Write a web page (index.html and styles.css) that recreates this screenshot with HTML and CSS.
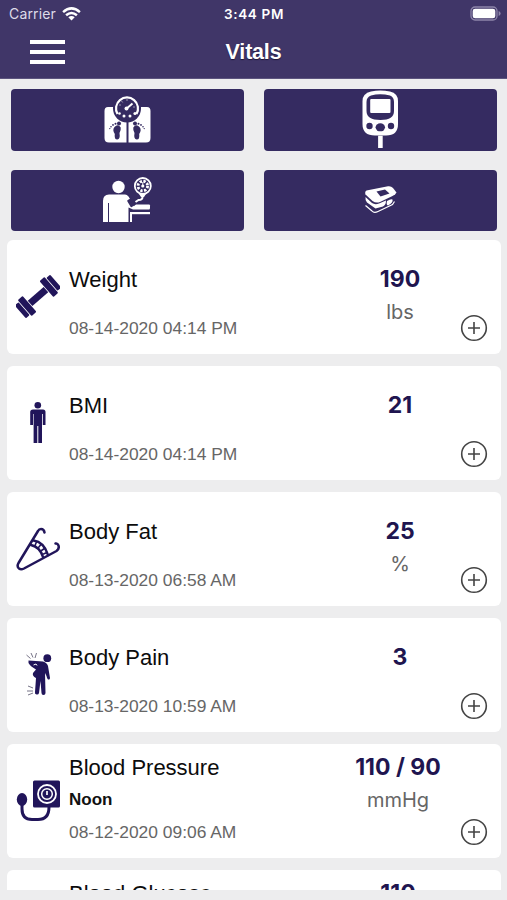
FILE: index.html
```html
<!DOCTYPE html>
<html lang="en">
<head>
<meta charset="utf-8">
<title>Vitals</title>
<link rel="stylesheet" href="styles.css">
</head>
<body>
<svg width="0" height="0" class="defs">
  <symbol id="plus" viewBox="0 0 28 28">
    <g fill="none" stroke="#444" stroke-width="1.6"><circle cx="14" cy="14" r="12.3"/><path d="M14 8v12M8 14h12"/></g>
  </symbol>
</svg>
<header class="header">
  <div class="status">
    <div class="carrier"><span class="carrier-name">Carrier</span>
      <svg class="wifi" viewBox="0 0 19 14"><g fill="none" stroke="#fff" stroke-width="2.5"><path d="M1.1 5.1Q9.5-2.3 17.9 5.1"/><path d="M4.1 8.3Q9.5 3.6 14.9 8.3"/></g><path fill="#fff" d="M6.3 10.3Q9.5 7.8 12.7 10.3L9.5 13.6Z"/></svg>
    </div>
    <div class="clock">3:44 PM</div>
    <svg class="battery" viewBox="0 0 31 15"><rect x="1" y="1" width="26" height="13" rx="4" fill="none" stroke="#8d85a9" stroke-width="1.3"/><rect x="2.7" y="2.7" width="22.6" height="9.6" rx="2.4" fill="#fff"/><path d="M28.6 5v5q2-.8 2-2.5t-2-2.5z" fill="#8d85a9"/></svg>
  </div>
  <div class="titlebar">
    <div class="menu"><i></i><i></i><i></i></div>
    <h1>Vitals</h1>
  </div>
</header>

<nav class="devices">
  <div class="device">
    <svg viewBox="90 85 80 70">
      <path fill="#fff" d="M108 107H114Q115 117 127 119.500Q139 117 141 107H147Q150.500 107 150.500 111V138Q150.500 142.500 146 142.500H109Q104.500 142.500 104.500 138V111Q104.500 107 108 107Z"/>
      <circle cx="127" cy="108.500" r="14" fill="#352b61"/>
      <path d="M117.500 114A11 11 0 1 1 136.500 114" fill="none" stroke="#fff" stroke-width="2.200"/>
      <path d="M127.500 117V143" stroke="#352b61" stroke-width="2"/>
      <path d="M125.500 109.500L132.500 103.500" stroke="#fff" stroke-width="2"/><circle cx="126.500" cy="108.500" r="2" fill="#fff"/>
      <path d="M119 105h2M121.500 101l1.200 1.500M127 99v2M133 107h2" stroke="#fff" stroke-opacity=".5"/>
      <g fill="#fff"><circle cx="119.500" cy="113.500" r="1.300"/><circle cx="124" cy="116" r="1.500"/><circle cx="130" cy="116" r="1.500"/><circle cx="135" cy="113.500" r="1.600"/></g>
      <g fill="#352b61"><path d="M114.500 127Q118 123.500 120.700 127.500Q121.200 130 119.500 133Q120.500 139 117.300 139.500Q114 139.500 114.800 134Q112 130 114.500 127Z"/><circle cx="119" cy="123.500" r="2"/><circle cx="115.500" cy="123.800" r="1"/><circle cx="113" cy="124.900" r=".9"/><circle cx="111" cy="126.700" r=".8"/><circle cx="109.800" cy="128.600" r=".7"/>
      <path d="M139.500 127Q136 123.500 133.300 127.500Q132.800 130 134.500 133Q133.500 139 136.700 139.500Q140 139.500 139.200 134Q142 130 139.500 127Z"/><circle cx="135" cy="123.500" r="2"/><circle cx="138.500" cy="123.800" r="1"/><circle cx="141" cy="124.900" r=".9"/><circle cx="143" cy="126.700" r=".8"/><circle cx="144.200" cy="128.600" r=".7"/></g>
    </svg>
  </div>
  <div class="device">
    <svg viewBox="340 85 80 70">
      <path fill="#fff" d="M371 91.500Q380 89.500 390 91.500Q398 93.500 398 101V124Q398 135.500 386 135.500H375Q362.500 135.500 362.500 124V101Q362.500 93.500 371 91.500Z"/>
      <path fill="#352b61" d="M371 95.500Q380 93 390 95.500Q394 97 394 102V111Q394 120 380.500 120Q366.500 120 366.500 111V102Q366.500 97 371 95.500Z"/>
      <rect x="370.200" y="99" width="20.300" height="14" rx="1" fill="#fff"/>
      <g fill="#352b61"><circle cx="369.500" cy="126" r="3.200"/><ellipse cx="380.300" cy="127.300" rx="4.700" ry="4"/><circle cx="391" cy="126" r="3.200"/></g>
      <path d="M380.400 135.800V148" stroke="#fff" stroke-width="4.600"/>
    </svg>
  </div>
  <div class="device">
    <svg viewBox="90 165 80 70">
      <g fill="#fff"><circle cx="118.500" cy="187" r="6.200"/><path d="M109 194.500H125Q127 194.500 128.500 196.500L134 205.500H149.500V209.500H133L128.500 207.500V222H103V201Q103 194.500 109 194.500Z"/><rect x="130" y="212" width="20" height="2.200"/><rect x="130" y="212" width="2" height="10"/><rect x="135" y="204.500" width="15" height="4.500" rx="1"/></g>
      <path d="M108.500 203V222" stroke="#352b61"/><rect x="-4" y="-3" width="8" height="6" rx="1" transform="translate(131.500 202.500) rotate(60)" fill="#352b61"/>
      <path d="M142.500 193V197Q142.500 200 138.500 200L135.500 202" fill="none" stroke="#fff" stroke-width="2"/>
      <circle cx="142.800" cy="186" r="8" fill="none" stroke="#fff" stroke-width="1.800"/><circle cx="142.800" cy="186" r="4.800" fill="none" stroke="#fff" stroke-width="2.800" stroke-dasharray="2.300 1.470"/><circle cx="142.800" cy="186" r="1.600" fill="#fff"/><path d="M142.800 182V187" stroke="#fff"/><path d="M139 194H146L144 197H141Z" fill="#fff"/>
    </svg>
  </div>
  <div class="device">
    <svg viewBox="340 165 80 70">
      <path fill="#fff" d="M366.500 190.500L388 186.300Q391 185.800 393 188L396.500 192.500Q395.500 194.500 392.500 196L380 202Q376 203.500 372.500 201L365.500 194.500Q364.500 191.500 366.500 190.500Z"/>
      <path fill="#352b61" d="M376.500 191.500L385 189.500L389.500 193.500L380.500 196.500Z"/>
      <path fill="#fff" d="M365.500 197L372 203Q375 205 379 203.500L386 200.500Q386 205 383 206.500L375.500 208.500L367 202.500Q365 200.500 365.500 197ZM387 201Q391 198.500 392.500 199.500Q393.500 202.500 388 205.500Q386 205 387 201Z"/>
      <path d="M365.500 205.500L372 211Q374 213.500 378 211.500L392.500 204.500L394.500 201.500" fill="none" stroke="#fff" stroke-width="1.200"/>
    </svg>
  </div>
</nav>

<main class="list">
  <article class="card">
    <svg class="icon" viewBox="0 0 44 44"><g fill="#21155a" transform="translate(22 21.500) rotate(-41)"><rect x="-10.500" y="-3.500" width="21" height="7"/><rect x="-23.500" y="-8.500" width="5" height="17" rx="1"/><rect x="-17.700" y="-10.500" width="6.500" height="21" rx="1"/><rect x="18.500" y="-8.500" width="5" height="17" rx="1"/><rect x="11.200" y="-10.500" width="6.500" height="21" rx="1"/></g></svg>
    <div class="details"><div class="names"><h2>Weight</h2></div><time>08-14-2020 04:14 PM</time></div>
    <div class="reading"><strong>190</strong><span>lbs</span></div>
    <svg class="add"><use href="#plus"/></svg>
  </article>
  <article class="card">
    <svg class="icon" viewBox="0 0 44 44"><g fill="#21155a"><circle cx="21.800" cy="4.300" r="3.300"/><path d="M17 8.500H27Q29.500 8.500 29.500 11V24H26.800V13H26V42H22.300V25H21.300V42H17.600V13H17V24H14.200V11Q14.200 8.500 17 8.500Z"/></g></svg>
    <div class="details"><div class="names"><h2>BMI</h2></div><time>08-14-2020 04:14 PM</time></div>
    <div class="reading"><strong>21</strong></div>
    <svg class="add"><use href="#plus"/></svg>
  </article>
  <article class="card">
    <svg class="icon" viewBox="0 0 44 44"><g fill="none" stroke="#21155a" stroke-width="2.500" stroke-linecap="round" stroke-linejoin="round"><path d="M28.500 5.500Q28 2 25 2Q23 2 22 4L2.500 36Q.500 39.500 3 41.500Q5 43 8 41.500L40.500 24Q43.500 22 42.500 18.500Q41.500 16 39.500 16.500"/><path d="M17.500 13.500Q28 15 32 28M15 18Q24 20 27 30"/><path stroke-width="1.600" d="M20.500 15l-1.500 3.500M25 17.500l-2.500 3M28.500 21.500l-3 2M31 25.500l-3.500 1.500"/></g></svg>
    <div class="details"><div class="names"><h2>Body Fat</h2></div><time>08-13-2020 06:58 AM</time></div>
    <div class="reading"><strong>25</strong><span>%</span></div>
    <svg class="add"><use href="#plus"/></svg>
  </article>
  <article class="card">
    <svg class="icon" viewBox="0 0 44 44"><circle cx="31.300" cy="5.200" r="3.900" fill="#21155a"/><path fill="#21155a" d="M12.500 7.500L27 8.500Q31 9.500 32 13L34 25Q34 27 32 26.500Q31 26 30.500 23L29 20L29.500 40Q29.500 42 27.500 42Q25.500 42 25.500 40L24.500 28L23 40Q22.500 42 20.500 41.500Q18.500 41 19 39L20 25Q16 23 17 20L20 16.500Q14 13 12.500 10Z"/><path d="M17.500 12l2.500-1 1 1.500" fill="none" stroke="#fff"/><path d="M10.500 2l4 3.500M15 0l2 4.500M20.500 0l-1.500 5M12 33l5 2M11 38h6M12 42l5-2" stroke="#777488" fill="none"/></svg>
    <div class="details"><div class="names"><h2>Body Pain</h2></div><time>08-13-2020 10:59 AM</time></div>
    <div class="reading"><strong>3</strong></div>
    <svg class="add"><use href="#plus"/></svg>
  </article>
  <article class="card noted">
    <svg class="icon" viewBox="0 0 44 44"><rect x="17" y="1.500" width="27" height="27" rx="1.500" fill="#21155a"/><g fill="none" stroke="#fff"><circle cx="31" cy="15" r="9" stroke-width="1.800"/><circle cx="31" cy="15" r="5.300" stroke-width="1.500"/><path d="M31 12v4" stroke-width="1.700"/></g><ellipse cx="6" cy="20.500" rx="5.200" ry="6.500" fill="#21155a"/><path d="M6 25V30Q6 40.500 16 40.500H22Q33 40.500 33 28" fill="none" stroke="#21155a" stroke-width="3"/></svg>
    <div class="details"><div class="names"><h2>Blood Pressure</h2><b>Noon</b></div><time>08-12-2020 09:06 AM</time></div>
    <div class="reading"><strong>110 / 90</strong><span>mmHg</span></div>
    <svg class="add"><use href="#plus"/></svg>
  </article>
  <article class="card noted">
    <svg class="icon" viewBox="0 0 44 44"></svg>
    <div class="details"><div class="names"><h2>Blood Glucose</h2></div></div>
    <div class="reading"><strong>110</strong></div>
  </article>
</main>
</body>
</html>
```

FILE: styles.css
```css
* { box-sizing: border-box; }
body {
  margin: 0;
  width: 507px;
  height: 900px;
  overflow: hidden;
  background: #ededee;
  font-family: "Liberation Sans", Arial, sans-serif;
}
svg { display: block; }
.defs { position: absolute; }

.header {
  height: 79px;
  background: #403668;
  color: #fff;
  border-bottom: 1px solid #5d557f;
}
.status {
  height: 27px;
  display: grid;
  grid-template-columns: 1fr auto 1fr;
  align-items: center;
  padding: 0 6px 0 9px;
  font-family: Inter, sans-serif;
  font-size: 14px;
}
.carrier { display: flex; align-items: center; gap: 6px; }
.carrier-name { color: #dedbe8; letter-spacing: .15px; }
.wifi { width: 19px; height: 14px; }
.clock { font-weight: 600; font-size: 13.5px; letter-spacing: .65px; margin-right: 2px; }
.battery { width: 31px; height: 15px; justify-self: end; }
.titlebar {
  height: 50px;
  display: grid;
  grid-template-columns: 60px 1fr 60px;
  align-items: center;
  padding: 0 30px;
}
.menu { display: flex; flex-direction: column; gap: 6px; width: 35px; }
.menu i { height: 4px; background: #fff; }
h1 {
  margin: 0;
  text-align: center;
  font-size: 21.5px;
  line-height: 26px;
  letter-spacing: -.2px;
  text-shadow: 0 1px 1px #1d1638;
}

.devices {
  display: grid;
  grid-template-columns: 1fr 1fr;
  gap: 19px 20px;
  padding: 10px 10px 0 11px;
}
.device {
  height: 61.5px;
  border-radius: 4px;
  background: #352b61;
  display: flex;
  align-items: center;
  padding-left: 79px;
  overflow: hidden;
}
.device:nth-child(even) { padding-left: 76px; }
.device svg { width: 80px; height: 70px; flex: none; }

.list {
  height: 650px;
  margin-top: 9px;
  padding: 0 6px 0 7px;
  overflow: hidden;
  display: flex;
  flex-direction: column;
  gap: 12px;
}
.card {
  flex: none;
  height: 114px;
  border-radius: 6px;
  background: #fff;
  display: grid;
  grid-template-columns: 62px 230px 1fr;
  grid-template-rows: 114px;
}
.icon { width: 44px; height: 44px; margin-left: 9px; align-self: center; }
.details { padding-top: 8px; }
.names { height: 64px; display: flex; flex-direction: column; }
h2 {
  flex: 1;
  margin: 0;
  display: flex;
  align-items: center;
  color: #0c0c0c;
  font-size: 22px;
  font-weight: 400;
}
.noted h2 { flex: 0 0 32px; }
.names b { height: 32px; line-height: 32px; font-size: 17px; color: #111; }
time { display: block; line-height: 32px; font-size: 17.4px; color: #666; }
.reading {
  grid-area: 1 / 3;
  padding-top: 23px;
  display: flex;
  flex-direction: column;
  align-items: center;
  font-family: Inter, sans-serif;
  line-height: 33px;
}
.noted .reading { padding: 7px 4px 0 0; }
.reading strong { font-size: 23px; font-weight: 700; color: #20154f; }
.reading span { font-size: 20px; color: #666; }
.add {
  grid-area: 1 / 3;
  justify-self: end;
  align-self: end;
  width: 28px;
  height: 28px;
  margin: 0 13px 12.5px 0;
}
```
